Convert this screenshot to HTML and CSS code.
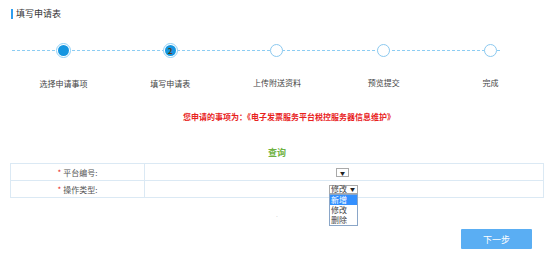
FILE: index.html
```html
<!DOCTYPE html>
<html lang="zh">
<head>
<meta charset="utf-8">
<link rel="stylesheet" href="styles.css">
</head>
<body>
<div class="page">
  <div class="title"><span class="bar"></span><span>填写申请表</span></div>
  <div class="steps">
    <div class="line"></div>
    <div class="step">
      <div class="dot done"><span></span></div>
      <div class="label">选择申请事项</div>
    </div>
    <div class="step">
      <div class="dot current"><span>2</span></div>
      <div class="label">填写申请表</div>
    </div>
    <div class="step">
      <div class="dot"></div>
      <div class="label">上传附送资料</div>
    </div>
    <div class="step">
      <div class="dot"></div>
      <div class="label">预览提交</div>
    </div>
    <div class="step">
      <div class="dot"></div>
      <div class="label">完成</div>
    </div>
  </div>
  <div class="notice">您申请的事项为：《电子发票服务平台税控服务器信息维护》</div>
  <div class="query">查询</div>
  <table class="form">
    <tr>
      <td class="key"><span class="star">*</span> 平台编号:</td>
      <td class="val"><div class="sel small">▼</div></td>
    </tr>
    <tr>
      <td class="key"><span class="star">*</span> 操作类型:</td>
      <td class="val">
        <div class="selwrap">
          <div class="sel wide"><span>修改</span><span class="arr">▼</span></div>
          <ul class="menu">
            <li class="on">新增</li>
            <li>修改</li>
            <li>删除</li>
          </ul>
        </div>
      </td>
    </tr>
  </table>
  <div class="tiny">.</div>
  <div class="actions"><button class="next">下一步</button></div>
</div>
</body>
</html>
```

FILE: styles.css
```css
* { box-sizing: border-box; }
html, body { margin: 0; padding: 0; background: #fff; }
body {
  font-family: "Noto Sans CJK SC", "Noto Sans", sans-serif;
  color: #444;
  width: 554px;
  height: 271px;
  overflow: hidden;
}
.page { padding: 0 10px 0 10px; }
.title {
  display: flex;
  align-items: center;
  gap: 3px;
  height: 10px;
  margin-top: 9px;
  font-size: 9px;
  line-height: 10px;
  color: #333;
}
.bar {
  display: inline-block;
  width: 2px;
  height: 10px;
  background: #2e9ef0;
  margin-left: 1px;
}
.steps {
  position: relative;
  display: flex;
  margin-top: 23px;
  width: 534px;
}
.line {
  position: absolute;
  left: 2px;
  width: 488px;
  top: 8px;
  border-top: 1px dashed #8dcdf3;
}
.step {
  flex: 1;
  display: flex;
  flex-direction: column;
  align-items: center;
  position: relative;
}
.dot {
  width: 13px;
  height: 13px;
  margin-top: 2px;
  border-radius: 50%;
  border: 1.5px solid #8cc9ef;
  background: #fff;
  display: flex;
  align-items: center;
  justify-content: center;
}
.dot.done, .dot.current {
  width: 15px;
  height: 15px;
  margin-top: 1px;
  border: 1px solid #8fd0f6;
}
.dot.done span, .dot.current span {
  width: 11px;
  height: 11px;
  border-radius: 50%;
  background: #1495e0;
  display: flex;
  align-items: center;
  justify-content: center;
  font-size: 8px;
  font-weight: bold;
  color: #5a3a10;
  line-height: 1;
}
.label {
  margin-top: 21px;
  font-size: 8px;
  line-height: 10px;
  color: #444;
}
.notice {
  margin-top: 22px;
  padding-left: 24px;
  text-align: center;
  font-size: 8px;
  line-height: 12px;
  font-weight: bold;
  color: #e8221d;
}
.query {
  margin-top: 24px;
  text-align: center;
  font-size: 9px;
  line-height: 12px;
  color: #6fb242;
  font-weight: bold;
}
.form {
  margin-top: 4px;
  width: 534px;
  border-collapse: collapse;
  font-size: 8px;
  color: #555;
}
.form td {
  border: 1px solid #dbe9f4;
  height: 17px;
  padding: 0;
  vertical-align: middle;
}
.form td.key { width: 134px; text-align: center; }
.star { color: #e8221d; }
.form td.val { position: relative; text-align: left; }
.sel {
  border: 1px solid #a9a9a9;
  background: #fff;
  font-size: 6px;
  line-height: 7px;
  color: #222;
}
.sel.small {
  width: 13px;
  height: 9px;
  margin-left: 191px;
  text-align: center;
  font-size: 5px;
  line-height: 7px;
}
.selwrap {
  position: relative;
  margin-left: 184px;
  width: 29px;
  height: 9px;
}
.sel.wide {
  width: 29px;
  height: 9px;
  display: flex;
  align-items: center;
  gap: 3px;
  padding-left: 1px;
  font-size: 8px;
  line-height: 8px;
  color: #444;
}
.sel.wide .arr { font-size: 5px; color: #222; }
.menu {
  position: absolute;
  left: 0;
  top: 9px;
  width: 29px;
  margin: 0;
  padding: 0;
  list-style: none;
  border: 1px solid #8aa6c8;
  background: #fff;
  font-size: 8px;
  z-index: 2;
}
.menu li {
  height: 10px;
  line-height: 10px;
  padding-left: 1px;
  color: #444;
}
.menu li.on { background: #3390ff; color: #fff; }
.tiny {
  text-align: center;
  font-size: 5px;
  color: #bbb;
  margin-top: 14px;
  line-height: 6px;
}
.actions {
  display: flex;
  justify-content: flex-end;
  margin-top: 11px;
  padding-right: 12px;
}
.next {
  width: 71px;
  height: 20px;
  border: 0;
  border-radius: 1px;
  background: #5aaef3;
  color: #fff;
  font-family: "Noto Sans CJK SC", sans-serif;
  font-size: 9px;
  padding: 0;
}
```
